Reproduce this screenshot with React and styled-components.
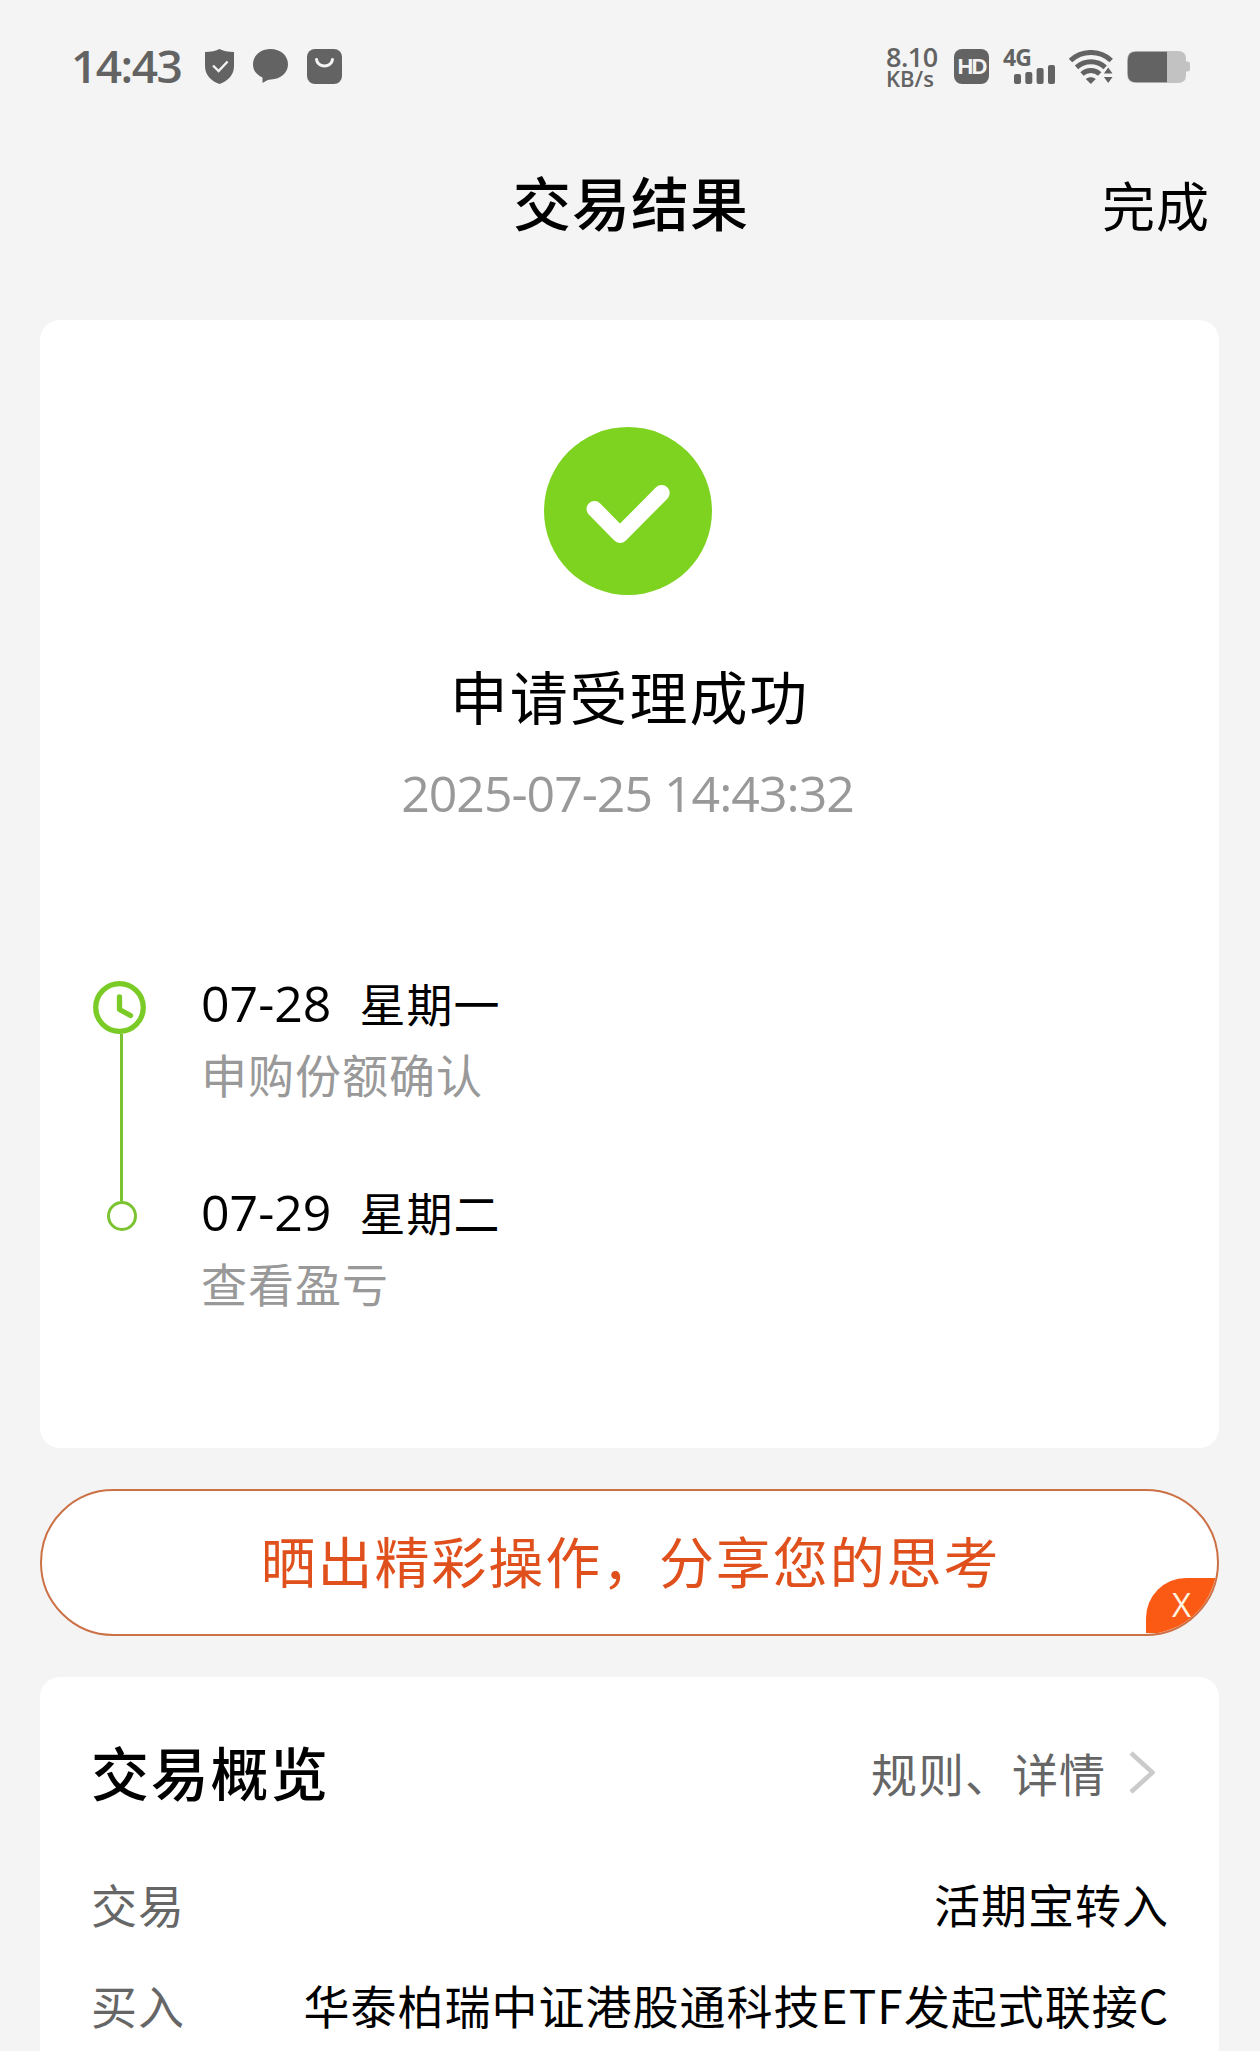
import React from "react";
import styled, { createGlobalStyle } from "styled-components";

const steps = [
  { date: "07-28", day: "星期一", text: "申购份额确认" },
  { date: "07-29", day: "星期二", text: "查看盈亏" },
];

const details = [
  { label: "交易", value: "活期宝转入" },
  { label: "买入", value: "华泰柏瑞中证港股通科技ETF发起式联接C" },
];

const ShieldIcon = () => (
  <svg width="29" height="35" viewBox="0 0 29 35">
    <path
      d="M14.5 0C18 2 23 3 29 3v14c0 9-6 15-14.5 18C6 32 0 26 0 17V3c6 0 11-1 14.5-3z"
      fill="#636363"
    />
    <path d="M8 16.5l5.6 5.5 9-9.5" fill="none" stroke="#f4f4f4" strokeWidth="2.3" />
  </svg>
);

const ChatIcon = () => (
  <svg width="35" height="35" viewBox="0 0 35 35">
    <path
      d="M17.5 0C27.5 0 35 6.5 35 15.3S27.5 30.3 18 30.5c-3 .2-5.5 1.5-8.5 3.500V28.500C3.500 26 0 21.500 0 15.300 0 6.500 7.500 0 17.500 0z"
      fill="#636363"
    />
  </svg>
);

const BagIcon = () => (
  <svg width="35" height="35" viewBox="0 0 35 35">
    <rect width="35" height="35" rx="8" fill="#636363" />
    <path
      d="M9.500 10.500c1 8.500 15 8.500 16 0"
      fill="none"
      stroke="#f4f4f4"
      strokeWidth="3"
      strokeLinecap="round"
    />
  </svg>
);

const SignalBars = () => (
  <svg width="41" height="19" viewBox="0 0 41 19">
    <rect x="0" y="9" width="7" height="10" rx="2" fill="#636363" />
    <rect x="11.300" y="7" width="7" height="12" rx="2" fill="#636363" />
    <rect x="22.600" y="3" width="7" height="16" rx="2" fill="#636363" />
    <rect x="34" y="0" width="7" height="19" rx="2" fill="#636363" />
  </svg>
);

const WifiIcon = () => (
  <svg width="44" height="34" viewBox="0 0 44 34">
    <g fill="none" stroke="#636363" strokeWidth="5">
      <path d="M1.500 10.500C13-.2 31-.2 42.200 10.500" />
      <path d="M7.500 17.300c8.300-7.500 20.500-7.500 28.700 0" />
      <path d="M13 24c5.200-4.600 12.500-4.600 17.700 0" />
    </g>
    <path d="M16.800 29c3-2.400 7-2.400 10 0l-5 5z" fill="#636363" />
    <path d="M39.200 17.500l4.300 6h-8.600zM39.200 33l4.300-6h-8.600z" fill="#636363" />
  </svg>
);

const BatteryIcon = () => (
  <svg width="63" height="32" viewBox="0 0 63 32">
    <path
      d="M9 0h42q8 0 8 8v2.500h1.500q2.500 0 2.500 2.500v5q0 2.500-2.500 2.500H59V24q0 8-8 8H9q-9 0-9-9V9q0-9 9-9z"
      fill="#c2c2c2"
    />
    <path d="M9 .8h31v30.400H9Q.8 31.200.8 23V9Q.8.8 9 .8z" fill="#636363" />
  </svg>
);

const SuccessIcon = () => (
  <svg width="168" height="168" viewBox="0 0 168 168">
    <circle cx="84" cy="84" r="84" fill="#7ed321" />
    <path
      d="M50.500 82L76 108l41.700-42"
      fill="none"
      stroke="#fff"
      strokeWidth="16"
      strokeLinecap="round"
      strokeLinejoin="round"
    />
  </svg>
);

const ClockIcon = () => (
  <svg width="53" height="53" viewBox="0 0 53 53">
    <g fill="none" stroke="#7acb26" strokeWidth="5.300" strokeLinecap="round" strokeLinejoin="round">
      <circle cx="26.500" cy="26.500" r="23.800" />
      <path d="M26.500 16v12.500l11 6" />
    </g>
  </svg>
);

const ChevronIcon = () => (
  <svg width="26" height="43" viewBox="0 0 26 43">
    <path d="M2 2l21.500 19.500L2 41" fill="none" stroke="#cbcbcb" strokeWidth="4.600" />
  </svg>
);

const App = () => {
  return (
    <>
      <GlobalStyle />
      <Page>
        <StatusBar>
          <StatusLeft>
            <Clock>14:43</Clock>
            <ShieldIcon />
            <ChatIcon />
            <BagIcon />
          </StatusLeft>
          <StatusRight>
            <Speed>
              <SpeedValue>8.10</SpeedValue>
              <SpeedUnit>KB/s</SpeedUnit>
            </Speed>
            <HdBadge>HD</HdBadge>
            <Signal>
              <Network>4G</Network>
              <SignalBars />
            </Signal>
            <WifiIcon />
            <BatteryIcon />
          </StatusRight>
        </StatusBar>

        <NavBar>
          <NavTitle>交易结果</NavTitle>
          <DoneButton>完成</DoneButton>
        </NavBar>

        <ResultCard>
          <SuccessIcon />
          <ResultTitle>申请受理成功</ResultTitle>
          <ResultTime>2025-07-25 14:43:32</ResultTime>
          <Timeline>
            <Rail>
              <ClockIcon />
              <RailLine />
              <RailDot />
            </Rail>
            <StepList>
              {steps.map((step) => (
                <li key={step.date}>
                  <StepDate>
                    {step.date}
                    <StepDay>{step.day}</StepDay>
                  </StepDate>
                  <StepText>{step.text}</StepText>
                </li>
              ))}
            </StepList>
          </Timeline>
        </ResultCard>

        <ShareBanner>
          晒出精彩操作，分享您的思考
          <CloseCorner>X</CloseCorner>
        </ShareBanner>

        <OverviewCard>
          <OverviewHeader>
            <OverviewTitle>交易概览</OverviewTitle>
            <RulesLink>
              规则、详情
              <ChevronIcon />
            </RulesLink>
          </OverviewHeader>
          {details.map((item) => (
            <DetailRow key={item.label}>
              <DetailLabel>{item.label}</DetailLabel>
              <span>{item.value}</span>
            </DetailRow>
          ))}
        </OverviewCard>
      </Page>
    </>
  );
};

const latin = `"Open Sans", "Noto Sans", sans-serif`;

const GlobalStyle = createGlobalStyle`
  * {
    box-sizing: border-box;
  }
  body {
    margin: 0;
    background: #f4f4f4;
    font-family: "Noto Sans CJK SC", sans-serif;
    color: #000;
  }
  svg {
    display: block;
    flex-shrink: 0;
  }
`;

const Page = styled.div`
  width: 1260px;
  height: 2051px;
  padding: 0 41px 0 40px;
  overflow: hidden;
  background: #f4f4f4;
`;

const StatusBar = styled.header`
  display: flex;
  align-items: center;
  justify-content: space-between;
  height: 133px;
  padding: 0 29px 0 31px;
  color: #636363;
  font-family: ${latin};
`;

const StatusLeft = styled.div`
  display: flex;
  align-items: center;
  gap: 19px;
`;

const Clock = styled.span`
  width: 115px;
  font-size: 46px;
  font-weight: 600;
  line-height: 60px;
  letter-spacing: -1.5px;
  padding-bottom: 3px;
`;

const StatusRight = styled.div`
  display: flex;
  align-items: center;
  gap: 14px;
`;

const Speed = styled.div`
  display: flex;
  flex-direction: column;
  width: 54px;
  padding-top: 4px;
  font-weight: 600;
`;

const SpeedValue = styled.span`
  font-size: 27px;
  line-height: 20px;
  letter-spacing: -0.5px;
`;

const SpeedUnit = styled.span`
  font-size: 22px;
  line-height: 23px;
`;

const HdBadge = styled.span`
  width: 35px;
  height: 35px;
  border-radius: 8px;
  background: #636363;
  color: #f4f4f4;
  font-family: "Liberation Sans", sans-serif;
  font-size: 22px;
  font-weight: 700;
  line-height: 36px;
  letter-spacing: -2px;
  text-align: center;
`;

const Signal = styled.div`
  display: flex;
  flex-direction: column;
  align-items: flex-end;
  width: 52px;
  height: 35px;
`;

const Network = styled.span`
  align-self: flex-start;
  height: 16px;
  font-size: 23px;
  font-weight: 700;
  line-height: 16px;
  letter-spacing: -1px;
`;

const NavBar = styled.nav`
  display: grid;
  grid-template-columns: 1fr auto 1fr;
  align-items: center;
  height: 132px;
  margin-bottom: 55px;
  padding: 4px 9px 0 12px;
`;

const NavTitle = styled.h1`
  grid-column: 2;
  margin: 0;
  font-size: 58px;
  font-weight: 500;
  line-height: 80px;
  letter-spacing: 1px;
`;

const DoneButton = styled.button`
  justify-self: end;
  margin: 6px 0 0;
  padding: 0;
  border: none;
  background: none;
  color: #000;
  font-family: inherit;
  font-size: 53px;
  line-height: 80px;
  letter-spacing: 1px;
`;

const ResultCard = styled.section`
  display: flex;
  flex-direction: column;
  align-items: center;
  height: 1128px;
  padding-top: 107px;
  border-radius: 20px;
  background: #fff;

  > svg {
    margin-right: 3px;
  }
`;

const ResultTitle = styled.h2`
  margin: 60px 0 0;
  font-size: 58px;
  font-weight: 400;
  line-height: 80px;
  letter-spacing: 1.9px;
`;

const ResultTime = styled.p`
  margin: 28px 4px 0 0;
  color: #999;
  font-family: ${latin};
  font-size: 50px;
  line-height: 60px;
  letter-spacing: -1px;
`;

const Timeline = styled.div`
  display: flex;
  align-self: stretch;
  gap: 51px;
  margin-top: 147px;
  padding-left: 53px;
`;

const Rail = styled.div`
  display: flex;
  flex-direction: column;
  align-items: center;
  width: 57px;
  height: 261px;
  padding-top: 11px;

  > svg {
    align-self: flex-start;
  }
`;

const RailLine = styled.div`
  flex: 1;
  width: 3px;
  background: #7cc332;
`;

const RailDot = styled.div`
  width: 30px;
  height: 30px;
  border: 3.5px solid #7cc332;
  border-radius: 50%;
`;

const StepList = styled.ul`
  display: flex;
  flex-direction: column;
  gap: 76px;
  margin: 0;
  padding: 0;
  list-style: none;
`;

const StepDate = styled.div`
  height: 66px;
  font-family: ${latin};
  font-size: 50px;
  line-height: 66px;
`;

const StepDay = styled.span`
  margin-left: 28px;
  font-family: "Noto Sans CJK SC", sans-serif;
  font-size: 46px;
  line-height: 0;
  letter-spacing: 1px;
`;

const StepText = styled.div`
  margin-top: 7px;
  color: #999;
  font-size: 46px;
  line-height: 60px;
  letter-spacing: 1px;
`;

const ShareBanner = styled.div`
  position: relative;
  display: flex;
  align-items: center;
  justify-content: center;
  height: 147px;
  margin: 41px 0;
  padding: 0 0 8px 2px;
  overflow: hidden;
  border: 2px solid #cc7045;
  border-radius: 74px;
  background: #fff;
  color: #e0501c;
  font-size: 55px;
  letter-spacing: 1.9px;
`;

const CloseCorner = styled.span`
  position: absolute;
  right: 0;
  bottom: 1px;
  width: 71px;
  height: 55px;
  padding-left: 26px;
  border-radius: 40px 0 0 0;
  background: #fa5a14;
  color: #fff3e0;
  font-family: ${latin};
  font-size: 33px;
  line-height: 54px;
`;

const OverviewCard = styled.section`
  height: 500px;
  padding: 54px 50px 0 51px;
  border-radius: 20px;
  background: #fff;
`;

const OverviewHeader = styled.div`
  display: flex;
  align-items: center;
  justify-content: space-between;
  height: 80px;
  margin-bottom: 41px;
`;

const OverviewTitle = styled.h3`
  margin: 0;
  font-size: 58px;
  font-weight: 500;
  line-height: 80px;
  letter-spacing: 1.7px;
`;

const RulesLink = styled.a`
  display: flex;
  align-items: center;
  gap: 23px;
  padding: 2px 14px 0 0;
  color: #666;
  font-size: 46px;
  line-height: 60px;
  letter-spacing: 1px;
`;

const DetailRow = styled.div`
  display: flex;
  align-items: center;
  justify-content: space-between;
  height: 101px;
  font-size: 46px;
  line-height: 60px;
  letter-spacing: 1px;
`;

const DetailLabel = styled.span`
  color: #666;
`;

export default App;
